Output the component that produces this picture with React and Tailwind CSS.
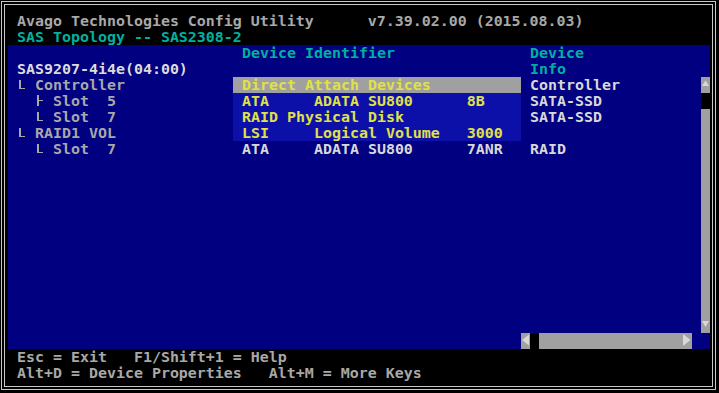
import React from "react";

const Corner = () => (
  <svg width="9" height="16" className="inline-block align-top" viewBox="0 0 9 16">
    <rect x="2" y="3" width="2" height="9" fill="#a8a8a8" />
    <rect x="2" y="11" width="6" height="1" fill="#a8a8a8" />
  </svg>
);

const Tee = () => (
  <svg width="9" height="16" className="inline-block align-top" viewBox="0 0 9 16">
    <rect x="2" y="2" width="2" height="11" fill="#a8a8a8" />
    <rect x="2" y="7" width="6" height="1" fill="#a8a8a8" />
  </svg>
);

const Up = () => (
  <svg width="9" height="16" viewBox="0 0 9 16" className="block">
    <polygon points="4.5,3.5 8,9 1,9" fill="#d8d8d8" />
  </svg>
);
const Down = () => (
  <svg width="9" height="16" viewBox="0 0 9 16" className="block">
    <polygon points="1,4 8,4 4.5,10" fill="#d8d8d8" />
  </svg>
);
const Left = () => (
  <svg width="9" height="16" viewBox="0 0 9 16" className="block">
    <polygon points="1,7 8,1.5 8,12.5" fill="#d8d8d8" />
  </svg>
);
const Right = () => (
  <svg width="9" height="16" viewBox="0 0 9 16" className="block">
    <polygon points="0,1 7.5,7 0,13" fill="#d8d8d8" />
  </svg>
);

function Row({ left, mid, midBg, midColor, right, rightColor }) {
  return (
    <div className="flex h-4 leading-4 whitespace-pre">
      <div className="w-[225px] h-4 text-[#a8a8a8]">{left}</div>
      <div className={`w-[288px] h-4 ${midBg || ""} ${midColor || "text-[#d8d8d8]"}`}>{mid}</div>
      <div className={`w-[180px] h-4 ${rightColor || "text-[#d8d8d8]"}`}>{right}</div>
    </div>
  );
}

export default function App() {
  return (
    <div className="w-[719px] h-[393px] bg-black overflow-hidden pt-px pl-px font-['DejaVu_Sans_Mono',monospace] font-bold text-[14.95px] leading-4">
      <div className="w-[715px] h-[389px] border border-[#c8c8c8] p-[2px]">
        <div className="w-[709px] h-[383px] border border-[#c8c8c8] pt-[8px] pl-[3px]">
          {/* header */}
          <div className="h-4 whitespace-pre text-[#a8a8a8]">{" Avago Technologies Config Utility      v7.39.02.00 (2015.08.03)"}</div>
          <div className="h-4 whitespace-pre text-[#00b0a0]">{" SAS Topology -- SAS2308-2"}</div>

          {/* blue area */}
          <div className="w-[702px] h-[304px] bg-[#000080] flex">
            <div className="w-[693px] flex flex-col">
              <Row left="" mid=" Device Identifier" midColor="text-[#00b0a0]" right=" Device" rightColor="text-[#00b0a0]" />
              <Row left={<span className="text-[#dcdcdc]"> SAS9207-4i4e(04:00)</span>} mid="" right=" Info" rightColor="text-[#00b0a0]" />
              <Row
                left={<>{" "}<Corner />{" Controller"}</>}
                mid=" Direct Attach Devices"
                midBg="bg-[#a0a0a0]"
                midColor="text-[#e0e048]"
                right=" Controller"
              />
              <Row
                left={<>{"   "}<Tee />{" Slot  5"}</>}
                mid=" ATA     ADATA SU800      8B"
                midBg="bg-[#0c10a8]"
                midColor="text-[#e0e048]"
                right=" SATA-SSD"
              />
              <Row
                left={<>{"   "}<Corner />{" Slot  7"}</>}
                mid=" RAID Physical Disk"
                midBg="bg-[#0c10a8]"
                midColor="text-[#e0e048]"
                right=" SATA-SSD"
              />
              <Row
                left={<>{" "}<Corner />{" RAID1 VOL"}</>}
                mid=" LSI     Logical Volume   3000"
                midBg="bg-[#0c10a8]"
                midColor="text-[#e0e048]"
                right=""
              />
              <Row
                left={<>{"   "}<Corner />{" Slot  7"}</>}
                mid=" ATA     ADATA SU800      7ANR"
                right=" RAID"
              />
              <div className="flex-1" />
              <div className="flex h-4">
                <div className="w-[513px]" />
                <div className="w-[9px] bg-[#a0a0a0]"><Left /></div>
                <div className="w-[9px] bg-black" />
                <div className="w-[144px] bg-[#a0a0a0]" />
                <div className="w-[9px] bg-[#a0a0a0]"><Right /></div>
                <div className="w-[9px]" />
              </div>
            </div>
            <div className="w-[9px] flex flex-col">
              <div className="h-8" />
              <div className="h-4 bg-[#a0a0a0]"><Up /></div>
              <div className="h-4 bg-black" />
              <div className="h-[208px] bg-[#a0a0a0]" />
              <div className="h-4 bg-[#a0a0a0]"><Down /></div>
              <div className="h-4" />
            </div>
          </div>

          {/* footer */}
          <div className="h-4 whitespace-pre text-[#a8a8a8]">{" Esc = Exit   F1/Shift+1 = Help"}</div>
          <div className="h-4 whitespace-pre text-[#a8a8a8]">{" Alt+D = Device Properties   Alt+M = More Keys"}</div>
        </div>
      </div>
    </div>
  );
}
